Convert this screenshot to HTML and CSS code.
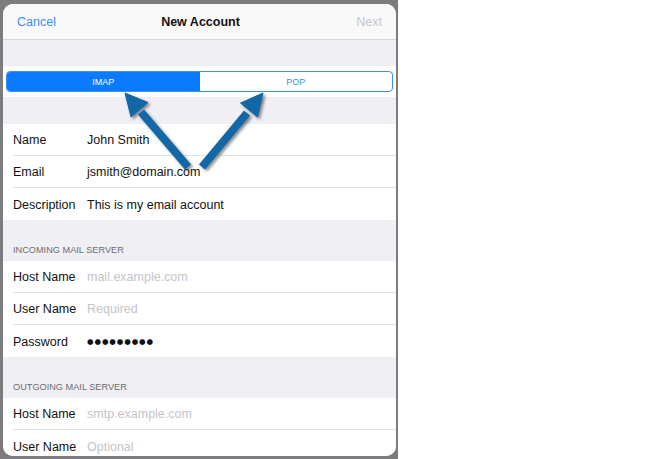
FILE: index.html
```html
<!DOCTYPE html>
<html lang="en">

<head>
    <meta charset="UTF-8" />
    <meta name="viewport" content="width=device-width, initial-scale=1.0" />
    <title>New Account</title>

    <link rel="stylesheet" href="styles.css">

</head>

<body>
    <div class="backdrop">
        <div class="sheet">
            <div class="nav-bar">
                <span class="nav-btn">Cancel</span>
                <span class="nav-title">New Account</span>
                <span class="nav-btn disabled">Next</span>
            </div>

            <div class="spacer"></div>

            <div class="segment-wrap">
                <div class="segment">
                    <div class="seg active">IMAP</div>
                    <div class="seg">POP</div>
                </div>
            </div>

            <div class="spacer tall"></div>

            <div class="group">
                <div class="row"><span class="label">Name</span><span class="value">John Smith</span></div>
                <div class="row"><span class="label">Email</span><span class="value">jsmith@domain.com</span></div>
                <div class="row"><span class="label">Description</span><span class="value">This is my email account</span></div>
            </div>

            <div class="section-header">INCOMING MAIL SERVER</div>
            <div class="group">
                <div class="row"><span class="label">Host Name</span><span class="value placeholder">mail.example.com</span></div>
                <div class="row"><span class="label">User Name</span><span class="value placeholder">Required</span></div>
                <div class="row"><span class="label">Password</span><span class="value dots">&#9679;&#9679;&#9679;&#9679;&#9679;&#9679;&#9679;&#9679;&#9679;</span></div>
            </div>

            <div class="section-header">OUTGOING MAIL SERVER</div>
            <div class="group">
                <div class="row"><span class="label">Host Name</span><span class="value placeholder">smtp.example.com</span></div>
                <div class="row"><span class="label">User Name</span><span class="value placeholder">Optional</span></div>
            </div>
        </div>
    </div>

    <!-- callout arrows pointing at the two segments -->
    <svg class="arrows" width="400" height="459" viewBox="0 0 400 459">
        <g fill="#1268a6" stroke="#1268a6">
            <line x1="141" y1="112" x2="188" y2="167" stroke-width="8" />
            <polygon points="125,93 148,102.5 131,117" stroke-width="1" />
            <line x1="247" y1="113" x2="202" y2="167" stroke-width="8" />
            <polygon points="263,93 257.5,117 240.5,103" stroke-width="1" />
        </g>
    </svg>
</body>

</html>
```

FILE: styles.css
```css
html,
body {
    margin: 0;
    padding: 0;
    background: #fff;
}

body {
    position: relative;
    font-family: "Liberation Sans", Arial, sans-serif;
    font-size: 12.5px;
    color: #111;
}

.backdrop {
    width: 398px;
    height: 459px;
    box-sizing: border-box;
    padding: 4px 2px 3px 3px;
    background: #7c7c7e;
}

.sheet {
    height: 100%;
    border-radius: 10px;
    overflow: hidden;
    background: #efeff4;
}

.nav-bar {
    height: 36px;
    display: flex;
    align-items: center;
    justify-content: space-between;
    padding: 0 14px;
    background: #f9f9f9;
    border-bottom: 1px solid #d6d6da;
    box-sizing: border-box;
}

.nav-btn {
    color: #3a8ff7;
    width: 60px;
}

.nav-btn.disabled {
    color: #c7c7cc;
    text-align: right;
}

.nav-title {
    font-weight: bold;
    margin-left: 2px;
}

.spacer {
    height: 26px;
}

.spacer.tall {
    height: 27px;
}

.segment-wrap {
    background: #fff;
    height: 31px;
    padding: 5px 3px 0 3px;
    box-sizing: border-box;
}

.segment {
    display: flex;
    height: 21px;
    border: 1px solid #3a8ff7;
    border-radius: 4px;
    overflow: hidden;
    box-sizing: border-box;
}

.seg {
    flex: 1;
    display: flex;
    align-items: center;
    justify-content: center;
    font-size: 9px;
    color: #3a8ff7;
}

.seg.active {
    background: #0a7aff;
    color: #fff;
}

.group {
    background: #fff;
    padding-left: 10px;
}

.row {
    height: 32px;
    display: flex;
    align-items: center;
    padding-top: 1px;
    border-bottom: 1px solid #e3e3e6;
    box-sizing: border-box;
}

.row:last-child {
    border-bottom: none;
}

.label {
    width: 74px;
}

.value.placeholder {
    color: #c4c4c8;
}

.value.dots {
    font-family: "DejaVu Sans", sans-serif;
    font-size: 7.5px;
    letter-spacing: 0.9px;
}

.section-header {
    height: 41px;
    display: flex;
    align-items: flex-end;
    padding: 0 0 6px 10px;
    box-sizing: border-box;
    font-size: 9.2px;
    color: #6d6d72;
}

.arrows {
    position: absolute;
    left: 0;
    top: 0;
    filter: drop-shadow(2px 2px 1.5px rgba(0, 0, 0, 0.45));
}
```
